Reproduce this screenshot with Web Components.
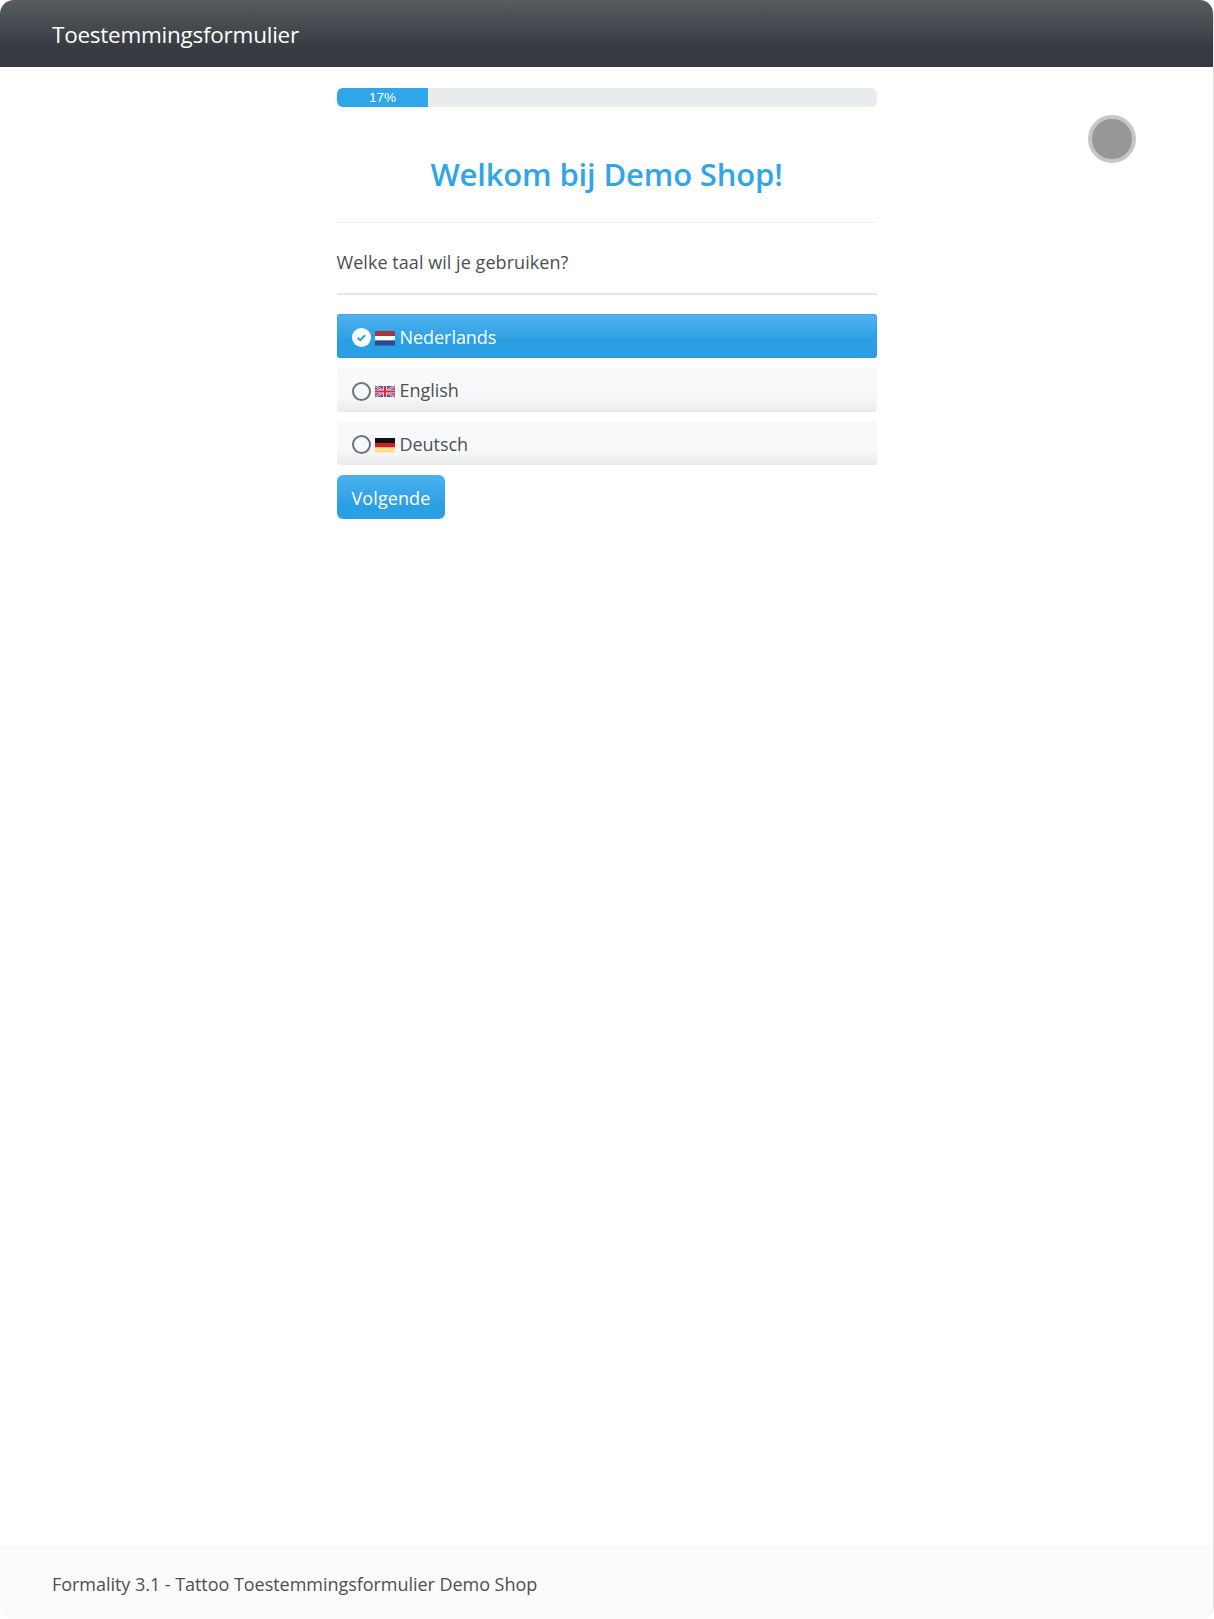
<!DOCTYPE html>
<html lang="nl">
<head>
<meta charset="utf-8">
<title>Toestemmingsformulier</title>
<style>
html, body { margin: 0; padding: 0; background: #fff; }
body { font-family: "Open Sans", "Noto Sans", "Liberation Sans", sans-serif; color: #495057; }
</style>
</head>
<body>
<form-shell>
  <form-header slot="header">Toestemmingsformulier</form-header>
  <form-progress value="17"></form-progress>
  <form-title>Welkom bij Demo Shop!</form-title>
  <form-question>Welke taal wil je gebruiken?</form-question>
  <lang-option checked flag="nl">Nederlands</lang-option>
  <lang-option flag="en">English</lang-option>
  <lang-option flag="de">Deutsch</lang-option>
  <next-button>Volgende</next-button>
  <form-footer slot="footer">Formality 3.1 - Tattoo Toestemmingsformulier Demo Shop</form-footer>
</form-shell>

<script>
const flags = {
    nl: `<rect width="20" height="5" fill="#a8343c"/><rect y="5" width="20" height="4.5" fill="#fff"/><rect y="9.5" width="20" height="5" fill="#2f4a90"/>`,
    en: `<rect y="2" width="20" height="11" fill="#4a5aa0"/>
         <path d="M0 2l20 11M20 2L0 13" stroke="#e8e8f0" stroke-width="2.2"/>
         <path d="M0 2l20 11M20 2L0 13" stroke="#d8344a" stroke-width="1"/>
         <path d="M10 2v11M0 7.5h20" stroke="#f4eef0" stroke-width="3.6"/>
         <path d="M10 2v11M0 7.5h20" stroke="#e0283e" stroke-width="2"/>`,
    de: `<rect width="20" height="5" fill="#111"/><rect y="5" width="20" height="4.5" fill="#d21f1f"/><rect y="9.5" width="20" height="5" fill="#fde08a"/>`
};

class FormShell extends HTMLElement {
    constructor() {
        super();
        this.attachShadow({mode: 'open'});
        this.shadowRoot.innerHTML = `
        <style>
        :host { display: flex; flex-direction: column; position: relative; min-height: 1619px; box-sizing: border-box; border-right: 1px solid #e4e4e4; border-radius: 14px; overflow: hidden; }
        main { flex: 1; width: 540px; margin: 0 auto; padding-top: 21px; display: flex; flex-direction: column; align-items: stretch; }
        .spinner { position: absolute; left: 1088px; top: 115px; width: 48px; height: 48px; box-sizing: border-box; border-radius: 50%; background: #979797; border: 4px solid #c6c6c6; }
        </style>
        <slot name="header"></slot>
        <main><slot></slot></main>
        <div class="spinner"></div>
        <slot name="footer"></slot>`;
    }
}

class FormHeader extends HTMLElement {
    constructor() {
        super();
        this.attachShadow({mode: 'open'});
        this.shadowRoot.innerHTML = `
        <style>
        :host { display: flex; align-items: center; height: 67px; box-sizing: border-box; padding: 2px 0 0 52px; color: #fff; font-size: 22.5px; letter-spacing: -0.25px; background: linear-gradient(#585c60, #343a40 75%); }
        </style>
        <slot></slot>`;
    }
}

class FormProgress extends HTMLElement {
    constructor() {
        super();
        this.attachShadow({mode: 'open'});
        const value = this.getAttribute('value');
        this.shadowRoot.innerHTML = `
        <style>
        :host { display: block; height: 19px; background: #e9ecef; border-radius: 6px; overflow: hidden; }
        .bar { height: 100%; width: ${value}%; background: #2fa5ea; color: #fff; font: 13.5px/20px "Liberation Sans", sans-serif; text-align: center; }
        </style>
        <div class="bar">${value}%</div>`;
    }
}

class FormTitle extends HTMLElement {
    constructor() {
        super();
        this.attachShadow({mode: 'open'});
        this.shadowRoot.innerHTML = `
        <style>
        :host { display: block; text-align: center; color: #2fa5ea; font-size: 31px; font-weight: 600; line-height: 40px; letter-spacing: -0.15px; padding: 47px 0 28px; border-bottom: 1px solid #f0f0f0; }
        </style>
        <slot></slot>`;
    }
}

class FormQuestion extends HTMLElement {
    constructor() {
        super();
        this.attachShadow({mode: 'open'});
        this.shadowRoot.innerHTML = `
        <style>
        :host { display: block; font-size: 18px; line-height: 27px; letter-spacing: 0.05px; padding: 26px 0 17px; margin-bottom: 19px; border-bottom: 2px solid #e4e6e9; color: #495057; }
        </style>
        <slot></slot>`;
    }
}

class LangOption extends HTMLElement {
    constructor() {
        super();
        this.attachShadow({mode: 'open'});
        const checked = this.hasAttribute('checked');
        const flag = flags[this.getAttribute('flag')];
        this.shadowRoot.innerHTML = `
        <style>
        :host { display: flex; align-items: center; height: 44px; box-sizing: border-box; margin-bottom: 9.5px; padding: 1px 0 0 15px; font-size: 18px; letter-spacing: -0.05px; border-radius: 3px; color: #495057; background: linear-gradient(#f8f9fb 65%, #e9eaeb); }
        :host([checked]) { color: #fff; background: linear-gradient(#52b3ee, #2b9fe4 60%); box-shadow: inset 0 0 0 1px rgba(40,150,220,.35); }
        .radio { width: 19px; height: 19px; margin-top: 2px; box-sizing: border-box; border-radius: 50%; border: 2px solid #6c757d; flex: none; }
        :host([checked]) .radio { border: 0; background: #fff; }
        .radio svg { display: block; }
        .flag { margin: 3px 5px 0 4px; flex: none; display: block; filter: blur(.3px); }
        </style>
        <span class="radio">${checked ? `<svg width="19" height="19" viewBox="0 0 19 19"><path d="M5.7 9.8l2.5 2.4 5-5" fill="none" stroke="#2b9fe4" stroke-width="2"/></svg>` : ''}</span>
        <svg class="flag" width="20" height="15" viewBox="0 0 20 15">${flag}</svg>
        <slot></slot>`;
    }
}

class NextButton extends HTMLElement {
    constructor() {
        super();
        this.attachShadow({mode: 'open'});
        this.shadowRoot.innerHTML = `
        <style>
        :host { display: inline-flex; align-self: flex-start; align-items: center; height: 44px; box-sizing: border-box; padding: 2px 15px 0; color: #fff; font-size: 18px; letter-spacing: 0.1px; border-radius: 6px; background: linear-gradient(#4db1ee, #2b9fe4 70%); cursor: pointer; }
        </style>
        <slot></slot>`;
    }
}

class FormFooter extends HTMLElement {
    constructor() {
        super();
        this.attachShadow({mode: 'open'});
        this.shadowRoot.innerHTML = `
        <style>
        :host { display: flex; align-items: center; height: 73px; box-sizing: border-box; padding: 2px 0 0 52px; font-size: 18px; letter-spacing: -0.04px; background: #fbfbfb; color: #495057; }
        </style>
        <slot></slot>`;
    }
}

customElements.define('form-shell', FormShell);
customElements.define('form-header', FormHeader);
customElements.define('form-progress', FormProgress);
customElements.define('form-title', FormTitle);
customElements.define('form-question', FormQuestion);
customElements.define('lang-option', LangOption);
customElements.define('next-button', NextButton);
customElements.define('form-footer', FormFooter);
</script>
</body>
</html>
